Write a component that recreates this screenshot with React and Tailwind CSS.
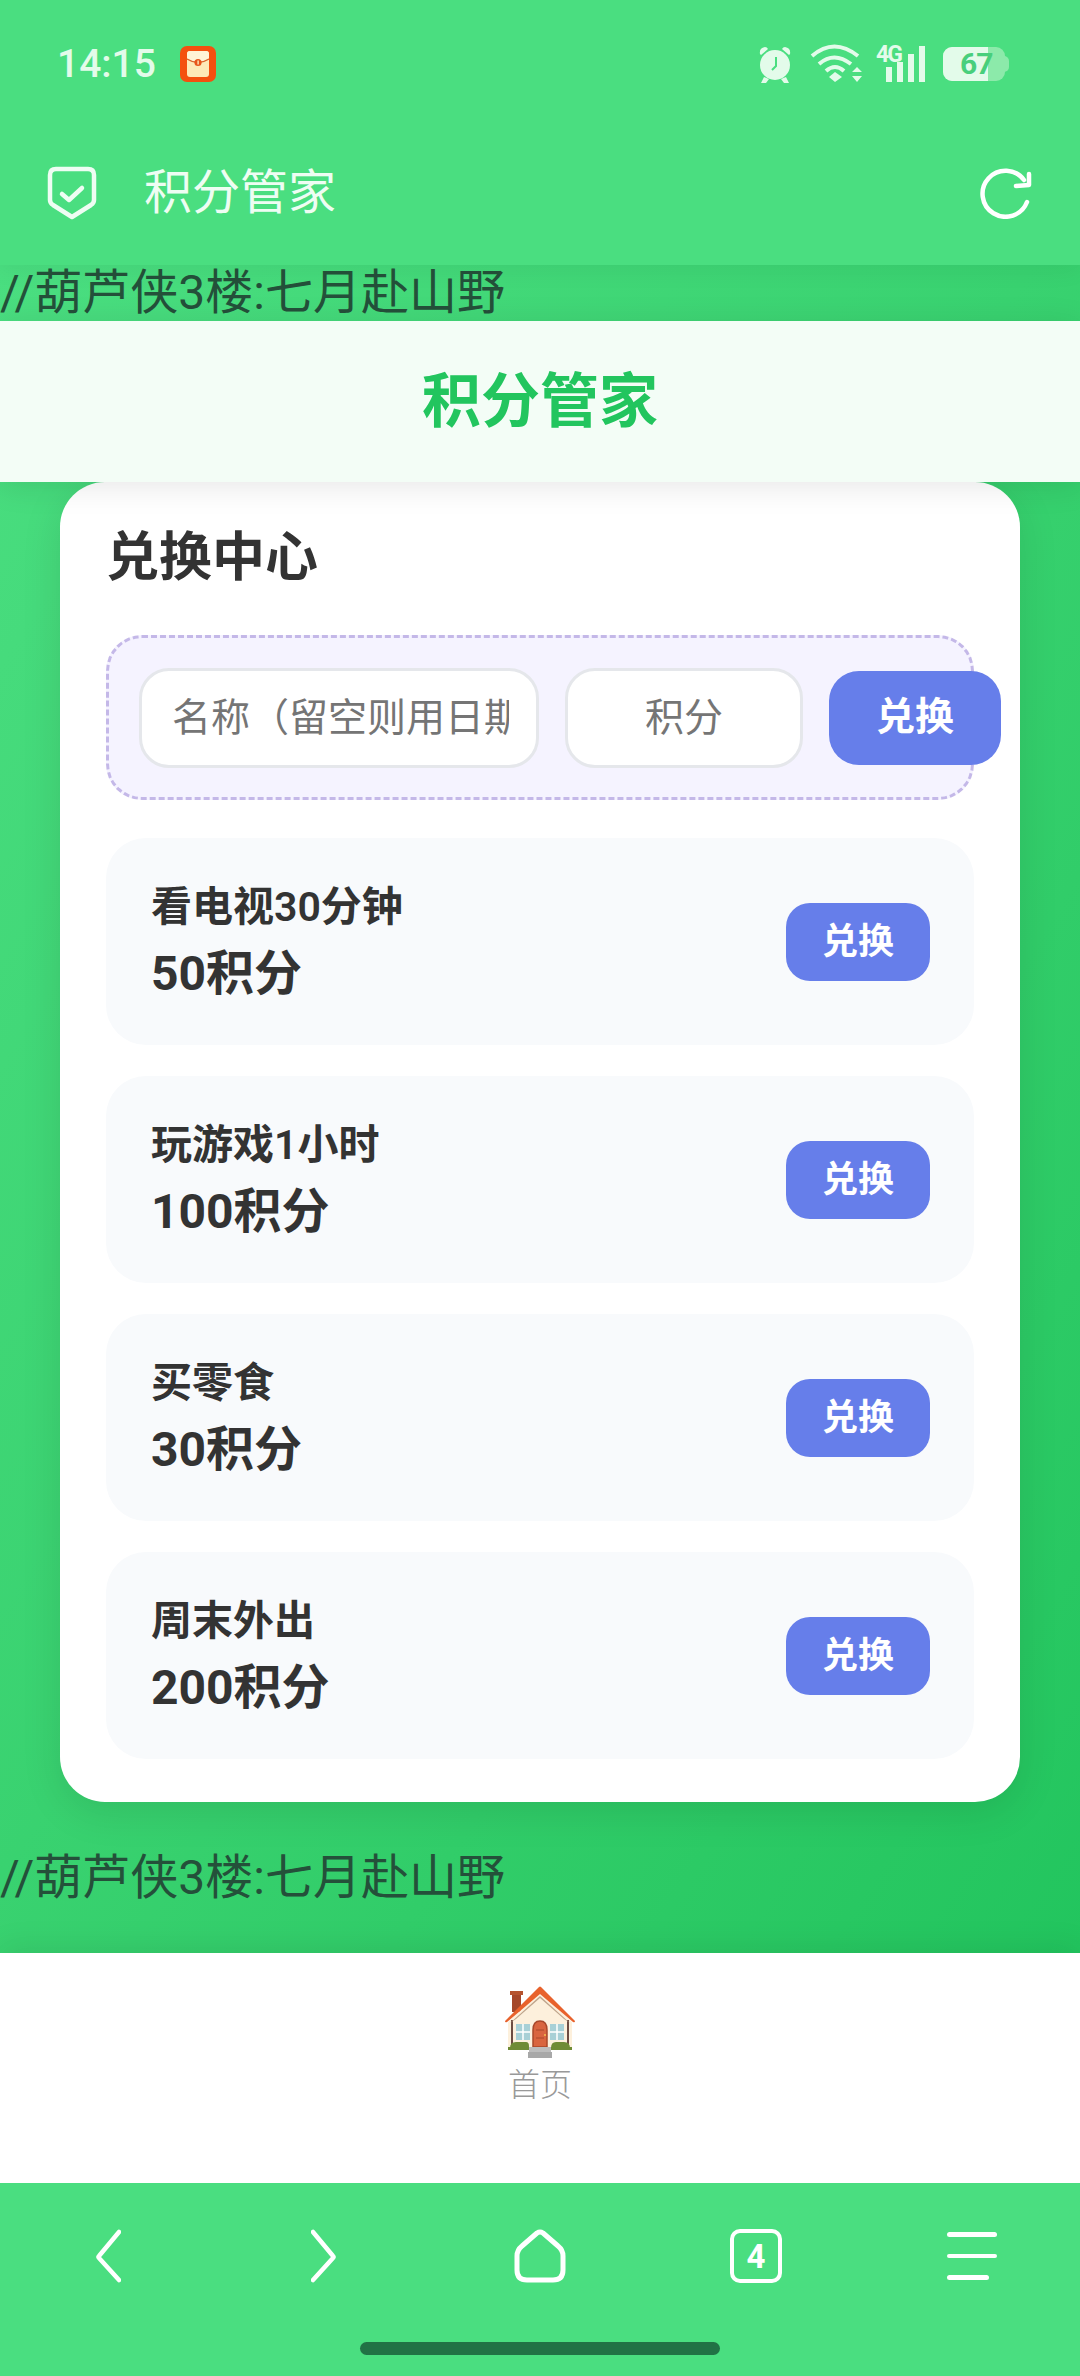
import React from "react";

const rewards = [
  { name: "看电视30分钟", points: "50积分" },
  { name: "玩游戏1小时", points: "100积分" },
  { name: "买零食", points: "30积分" },
  { name: "周末外出", points: "200积分" },
];

function RedPacket() {
  return (
    <svg width="36" height="36" viewBox="0 0 36 36">
      <rect width="36" height="36" rx="7" fill="#f4500f" />
      <rect x="7" y="5" width="22" height="26" rx="3" fill="#fde9b8" />
      <path d="M7 12 Q18 20 29 12 V8 Q29 5 26 5 H10 Q7 5 7 8 Z" fill="#fff3d6" />
      <path d="M7 13 Q18 20 29 13" fill="none" stroke="#d9622b" strokeWidth="1.4" />
      <circle cx="18" cy="16.5" r="3.6" fill="#e8541a" />
      <rect x="17.4" y="14.5" width="1.4" height="4" fill="#fde9b8" />
    </svg>
  );
}

function StatusIcons() {
  const c = "#e3fbea";
  return (
    <div className="flex items-center">
      <svg width="40" height="40" viewBox="0 0 40 40" className="mr-[15px]">
        <circle cx="20" cy="21" r="15" fill={c} />
        <path d="M5 10 Q4 4 10 3 Q12 3 13 5 L6 11 Z M35 10 Q36 4 30 3 Q28 3 27 5 L34 11 Z" fill={c} />
        <path d="M9 33 L6 39 H11 L14 35 Z M31 33 L34 39 H29 L26 35 Z" fill={c} />
        <path d="M21 13 V22 L17 26" fill="none" stroke="#4ade80" strokeWidth="2" />
      </svg>
      <svg width="54" height="40" viewBox="0 0 54 40" className="mr-[12px]">
        <path d="M2 12 Q24 -7 48 12" fill="none" stroke={c} strokeWidth="4" />
        <path d="M9 20 Q24 7 41 20" fill="none" stroke={c} strokeWidth="4" />
        <path d="M16 27 Q25 19 34 27" fill="none" stroke={c} strokeWidth="4" />
        <path d="M19 33 L25 28 L32 33 L25 38 Z" fill={c} />
        <path d="M42 28 L47 23 L52 28 Z M42 32 H52 L47 38 Z" fill={c} />
      </svg>
      <div className="relative w-[50px] h-[36px] mr-[17px]">
        <span className="absolute left-0 top-[-3px] text-[23px] leading-[24px] font-bold text-[#e3fbea] font-['Roboto',sans-serif] tracking-[-2px]">4G</span>
        <svg width="50" height="36" viewBox="0 0 50 36">
          <rect x="10" y="21" width="6" height="15" fill={c} />
          <rect x="21" y="16" width="6" height="20" fill={c} />
          <rect x="32" y="8" width="6" height="28" fill={c} />
          <rect x="43" y="0" width="6" height="36" fill={c} />
        </svg>
      </div>
      <div className="relative w-[66px] h-[34px]">
        <div className="absolute left-0 top-0 w-[62px] h-[34px] rounded-[9px] bg-[#8ceaaa]" />
        <div className="absolute right-0 top-[9px] w-[6px] h-[16px] rounded-r-[5px] bg-[#8ceaaa]" />
        <div className="absolute left-0 top-0 w-[45px] h-[34px] rounded-l-[9px] bg-[#e3fbea]" />
        <span className="absolute left-[17px] top-0 text-[30px] leading-[34px] font-bold text-[#48cf7c] font-['Roboto',sans-serif] tracking-[-1px]">67</span>
      </div>
    </div>
  );
}

function HouseEmoji() {
  return (
    <svg width="72" height="72" viewBox="0 0 72 72">
      <rect x="8" y="6" width="9" height="20" fill="#a5472a" />
      <rect x="6" y="5" width="13" height="4" fill="#b5532f" />
      <path d="M36 6 L68 36 V62 H4 V36 Z" fill="#fdf0dc" />
      <rect x="7" y="34" width="2" height="26" fill="#6d4c41" />
      <rect x="63" y="34" width="2" height="26" fill="#6d4c41" />
      <path d="M36 11 L63 36 H9 Z" fill="#fdf0dc" />
      <path d="M36 10 L66 37 L60 33 L36 12 L12 33 L6 37 Z" fill="#bfa58c" />
      <path d="M35 1 Q36 0 37 1 L71 35 Q71 37 69 36 L36 8 L3 36 Q1 37 1 35 Z" fill="#e8622c" />
      <rect x="12" y="38" width="14" height="16" fill="#a8d0d6" />
      <path d="M19 38 V54 M12 46 H26" stroke="#fff" strokeWidth="1.5" />
      <rect x="46" y="38" width="14" height="16" fill="#a8d0d6" />
      <path d="M53 38 V54 M46 46 H60" stroke="#fff" strokeWidth="1.5" />
      <path d="M29 61 V44 Q29 35 36 35 Q43 35 43 44 V61 Z" fill="#d9653f" stroke="#a9482a" strokeWidth="1.5" />
      <path d="M32 44 H40 M32 52 H40" stroke="#a9482a" strokeWidth="1.2" />
      <circle cx="41" cy="49" r="1" fill="#f2c14e" />
      <path d="M6 62 Q6 56 12 56 H22 Q25 56 25 60 V62 Z M47 62 Q47 56 52 56 H60 Q66 56 66 62 Z" fill="#6f8b35" />
      <rect x="4" y="61" width="24" height="3" fill="#6f8b35" />
      <rect x="45" y="61" width="23" height="3" fill="#6f8b35" />
      <rect x="25" y="61" width="22" height="5" fill="#bdbdbd" />
      <rect x="24" y="66" width="24" height="6" fill="#a8a8a8" />
    </svg>
  );
}

function App() {
  return (
    <div className="w-[1080px] h-[2376px] flex flex-col overflow-hidden font-['Roboto','Noto_Sans_CJK_SC',sans-serif] text-[#333]">
      {/* system + app bar */}
      <div className="relative z-20 h-[265px] bg-[#4ade80] shrink-0 shadow-[0_4px_24px_rgba(0,0,0,0.06)]">
        <div className="h-[128px] flex items-center justify-between pl-[57px] pr-[71px]">
          <div className="flex items-center">
            <span className="text-[39px] font-medium text-[#e3fbea] leading-none">14:15</span>
            <span className="ml-[24px]"><RedPacket /></span>
          </div>
          <StatusIcons />
        </div>
        <div className="h-[130px] flex items-center justify-between pl-[47px] pr-[48px]">
          <div className="flex items-center">
            <svg width="50" height="54" viewBox="0 0 50 54" fill="none" stroke="#eefdf3" strokeWidth="4.5" strokeLinejoin="round" strokeLinecap="round">
              <path d="M9 3 H41 Q47 3 47 9 V34 Q47 37 44 39 L25 51 L6 39 Q3 37 3 34 V9 Q3 3 9 3 Z" />
              <path d="M15 28 L22 34 L35 22" />
            </svg>
            <span className="ml-[47px] text-[48px] leading-none text-[#eefdf3]">积分管家</span>
          </div>
          <svg width="52" height="52" viewBox="0 0 52 52" fill="none" stroke="#ffffff" strokeWidth="4.5" strokeLinecap="round" strokeLinejoin="round">
            <path d="M47 35 A23 23 0 1 1 44 13" />
            <path d="M36 19 L49 18 L49 7" />
          </svg>
        </div>
      </div>

      {/* page */}
      <div className="flex-1 min-h-0 relative flex flex-col bg-gradient-to-br from-[#4ade80] to-[#22c55e]">
        <div className="h-[56px] text-[48px] leading-[56px] whitespace-nowrap text-[#24503a]">//葫芦侠3楼:七月赴山野</div>
        <div className="relative z-10 h-[161px] flex items-center justify-center bg-[#f3fdf6] shadow-[0_4px_30px_rgba(0,0,0,0.1)]">
          <h1 className="text-[59px] font-bold leading-none text-[#22c55e]">积分管家</h1>
        </div>
        <div className="mx-[60px] h-[1320px] rounded-[45px] bg-white px-[46px] pt-[46px] shadow-[0_10px_40px_rgba(0,0,0,0.1)]">
          <h2 className="text-[53px] leading-[60px] font-bold mb-[47px]">兑换中心</h2>
          <div className="h-[165px] flex items-center gap-[26px] px-[30px] rounded-[36px] border-[3px] border-dashed border-[#c4b8e8] bg-[#f5f3ff]">
            <input readOnly placeholder="名称（留空则用日期）" className="w-[400px] h-[100px] shrink-0 rounded-[30px] border-[3px] border-[#e5e7eb] bg-white pl-[30px] pr-[27px] text-[39px] outline-none placeholder:text-[#757575]" />
            <input readOnly placeholder="积分" className="w-[238px] h-[100px] shrink-0 rounded-[30px] border-[3px] border-[#e5e7eb] bg-white text-center text-[39px] outline-none placeholder:text-[#757575]" />
            <button className="w-[172px] h-[94px] shrink-0 rounded-[30px] bg-[#667eea] text-white text-[39px] font-bold">兑换</button>
          </div>
          <div className="mt-[38px] flex flex-col gap-[31px]">
            {rewards.map((r) => (
              <div key={r.name} className="h-[207px] flex items-center justify-between rounded-[40px] bg-[#f8fafc] pl-[45px] pr-[44px]">
                <div>
                  <div className="text-[41px] leading-[52px] font-semibold mb-[13px]">{r.name}</div>
                  <div className="text-[48px] leading-[56px] font-bold">{r.points}</div>
                </div>
                <button className="w-[144px] h-[78px] rounded-[24px] bg-[#667eea] text-white text-[36px] font-bold">兑换</button>
              </div>
            ))}
          </div>
        </div>
        <div className="mt-[48px] h-[56px] text-[48px] leading-[56px] whitespace-nowrap text-[#24503a]">//葫芦侠3楼:七月赴山野</div>
      </div>

      {/* tab bar */}
      <div className="relative z-10 h-[230px] shrink-0 bg-white flex flex-col items-center pt-[33px] shadow-[0_-6px_30px_rgba(0,0,0,0.08)]">
        <HouseEmoji />
        <span className="mt-[9px] text-[32px] leading-[36px] font-light text-[#999]">首页</span>
      </div>

      {/* browser toolbar */}
      <div className="relative z-10 h-[193px] shrink-0 bg-[#4ade80] flex flex-col">
        <div className="h-[146px] grid grid-cols-5 items-center justify-items-center">
          <svg width="26" height="54" viewBox="0 0 26 54" fill="none" stroke="#fff" strokeWidth="4.5" strokeLinecap="round" strokeLinejoin="round">
            <path d="M24 3 L4 27 Q3 28 4 29 L24 51" />
          </svg>
          <svg width="26" height="54" viewBox="0 0 26 54" fill="none" stroke="#fff" strokeWidth="4.5" strokeLinecap="round" strokeLinejoin="round">
            <path d="M2 3 L22 27 Q23 28 22 29 L2 51" />
          </svg>
          <svg width="52" height="54" viewBox="0 0 52 54" fill="none" stroke="#fff" strokeWidth="5" strokeLinejoin="round">
            <path d="M23 4 Q26 2 29 4 L44 17 Q49 21 49 27 V41 Q49 51 39 51 H13 Q3 51 3 41 V27 Q3 21 8 17 Z" />
          </svg>
          <div className="w-[52px] h-[54px] flex items-center justify-center rounded-[10px] border-[4.5px] border-white text-white text-[33px] font-bold leading-none">4</div>
          <div className="w-[50px] flex flex-col gap-[17px]">
            <div className="h-[4.5px] w-[50px] bg-white rounded-full" />
            <div className="h-[4.5px] w-[50px] bg-white rounded-full" />
            <div className="h-[4.5px] w-[42px] bg-white rounded-full" />
          </div>
        </div>
        <div className="flex justify-center pt-[13px]">
          <div className="w-[360px] h-[13px] rounded-full bg-[#217245]" />
        </div>
      </div>
    </div>
  );
}

export default App;
